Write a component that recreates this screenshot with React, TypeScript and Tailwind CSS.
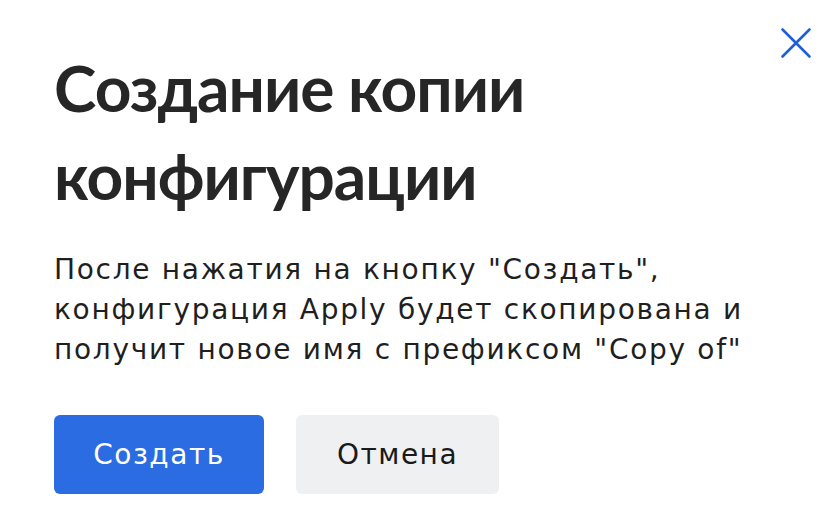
// Confirmation dialog for duplicating a configuration
export default function App() {
  return (
    <div className="relative h-[532px] w-[838px] bg-white text-[#262626]">
      <button className="absolute left-[780px] top-[27px] text-[#1f5fd6]" aria-label="Закрыть">
        <svg width="32" height="32" viewBox="0 0 32 32" fill="none">
          <path d="M2.5 2.5 L29.5 29.5 M29.5 2.5 L2.5 29.5" stroke="currentColor" strokeWidth="2.6" strokeLinecap="round" />
        </svg>
      </button>

      <div className="flex flex-col px-[54px] pt-[44px]">
        <h1
          className="w-[560px] text-[64px] font-bold leading-[88px] tracking-[-1px]"
          style={{ fontFamily: "Lato, Roboto, sans-serif" }}
        >
          Создание копии конфигурации
        </h1>

        <p
          className="mt-[30px] text-[28px] leading-[40px] tracking-[1.7px] text-[#1f1f1f]"
          style={{ fontFamily: "'DejaVu Sans', 'Noto Sans', sans-serif" }}
        >
          После нажатия на кнопку "Создать",
          <br />
          конфигурация Apply будет скопирована и
          <br />
          получит новое имя с префиксом "Copy of"
        </p>

        <div
          className="mt-[45px] flex gap-[32px] text-[28px] tracking-[1.5px]"
          style={{ fontFamily: "'DejaVu Sans', 'Noto Sans', sans-serif" }}
        >
          <button className="flex h-[79px] w-[210px] items-center justify-center rounded-[6px] bg-[#2b6ce2] text-white">
            Создать
          </button>
          <button className="flex h-[79px] w-[203px] items-center justify-center rounded-[6px] bg-[#eff0f2] text-[#1a1a1a]">
            Отмена
          </button>
        </div>
      </div>
    </div>
  );
}
